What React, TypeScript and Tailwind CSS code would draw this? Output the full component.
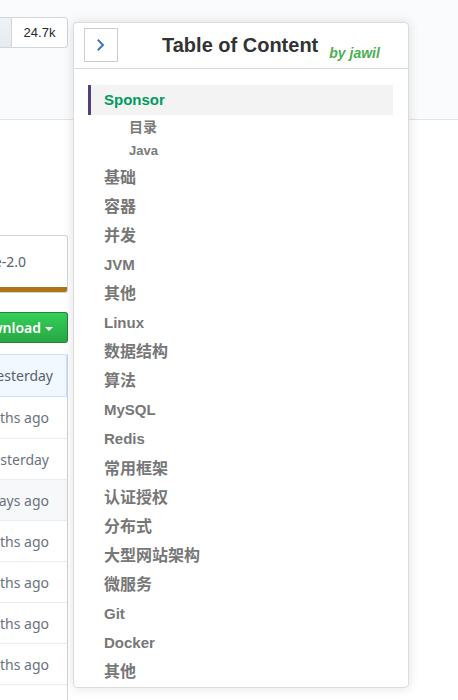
import React from 'react';

type TocItem = { label: string; level: 1 | 2; active?: boolean };

const toc: TocItem[] = [
  { label: 'Sponsor', level: 1, active: true },
  { label: '目录', level: 2 },
  { label: 'Java', level: 2 },
  { label: '基础', level: 1 },
  { label: '容器', level: 1 },
  { label: '并发', level: 1 },
  { label: 'JVM', level: 1 },
  { label: '其他', level: 1 },
  { label: 'Linux', level: 1 },
  { label: '数据结构', level: 1 },
  { label: '算法', level: 1 },
  { label: 'MySQL', level: 1 },
  { label: 'Redis', level: 1 },
  { label: '常用框架', level: 1 },
  { label: '认证授权', level: 1 },
  { label: '分布式', level: 1 },
  { label: '大型网站架构', level: 1 },
  { label: '微服务', level: 1 },
  { label: 'Git', level: 1 },
  { label: 'Docker', level: 1 },
  { label: '其他', level: 1 },
];

const commits = [
  { age: '6 months ago', hover: false },
  { age: 'yesterday', hover: false },
  { age: '3 days ago', hover: true },
  { age: '4 months ago', hover: false },
  { age: '5 months ago', hover: false },
  { age: '2 months ago', hover: false },
  { age: '8 months ago', hover: false },
  { age: '', hover: false },
];

const isCjk = (s: string) => /[\u4e00-\u9fff]/.test(s);

const ChevronRight: React.FC = () => (
  <svg width="8" height="12" viewBox="0 0 8 12" fill="none">
    <polyline points="1.5,1.5 6,6 1.5,10.5" stroke="#4078c0" strokeWidth="2" strokeLinecap="square" />
  </svg>
);

const TocPanel: React.FC = () => (
  <div className="absolute left-[73px] top-[22px] h-[666px] w-[336px] rounded-[4px] border border-[#dcdcdc] bg-white shadow-[0_0_12px_rgba(0,0,0,0.12)]">
    <div className="flex h-[46px] items-center border-b border-[#d8d8d8] pb-[1px]">
      <button className="ml-[10px] flex h-[34px] w-[34px] items-center justify-center border border-[#cccccc] bg-white">
        <ChevronRight />
      </button>
      <h2 className="ml-[44px] text-[20px] font-bold leading-[23px] text-[#333333]">Table of Content</h2>
      <span className="ml-[11px] mt-[15px] text-[14px] font-bold italic leading-[16px] text-[#4caf50]">by jawil</span>
    </div>
    <ul className="ml-[14px] mr-[15px] mt-[16px]">
      {toc.map((item, i) => {
        if (item.active) {
          return (
            <li
              key={i}
              className="flex h-[30px] items-center border-l-[3px] border-[#563d7c] bg-[#f3f3f3] pl-[13px] text-[15px] font-bold text-[#009a61]"
            >
              {item.label}
            </li>
          );
        }
        if (item.level === 2) {
          return (
            <li
              key={i}
              className={`flex h-[24px] items-center pl-[41px] font-bold text-[#7a7a7a] ${isCjk(item.label) ? 'text-[14px]' : 'text-[13px]'}`}
            >
              {item.label}
            </li>
          );
        }
        return (
          <li
            key={i}
            className={`flex h-[29.12px] items-center pl-[16px] font-bold text-[#777777] ${isCjk(item.label) ? 'text-[16px]' : 'text-[15px]'}`}
          >
            {item.label}
          </li>
        );
      })}
    </ul>
  </div>
);

export default function App() {
  return (
    <div className="relative h-[700px] w-[458px] overflow-hidden bg-white font-['Liberation_Sans','Noto_Sans_CJK_SC',sans-serif]">
      {/* repo header strip */}
      <div className="h-[120px] border-b border-[#e1e4e8] bg-[#fafbfc] pt-[17px]">
        <div className="flex h-[31px] w-[68px]">
          <div className="w-[11px] border-y border-[#d1d5da] bg-gradient-to-b from-[#eff3f6] to-[#e6ebf1]" />
          <div className="flex w-[57px] items-center justify-center rounded-r-[3px] border border-[#d1d5da] bg-white text-[13px] text-[#24292e]">
            24.7k
          </div>
        </div>
      </div>

      {/* left column, clipped by the viewport */}
      <div className="w-[68px] overflow-hidden pt-[115px] font-['Noto_Sans',sans-serif]">
        <div className="overflow-hidden rounded-r-[3px] border border-l-0 border-[#d1d5da]">
          <div className="flex h-[51px] items-center justify-end overflow-hidden pr-[41px] text-[14px] whitespace-nowrap text-[#586069]">
            Apache-2.0
          </div>
          <div className="h-[5px] bg-[#b07219]" />
        </div>

        <div className="mt-[19px] flex h-[31px] items-center justify-end overflow-hidden whitespace-nowrap rounded-r-[3px] border border-l-0 border-[#22863a] bg-gradient-to-b from-[#34d058] to-[#28a745] pr-[14px] text-[14px] font-semibold text-white">
          Clone or download
          <span className="ml-[4px] mt-[2px] h-0 w-0 border-x-[4px] border-t-[4px] border-x-transparent border-t-white" />
        </div>

        <div className="mt-[11px] border-r border-[#d1d5da]">
          <div className="flex h-[43px] items-center justify-end overflow-hidden whitespace-nowrap rounded-tr-[3px] border border-l-0 border-[#c8e1ff] bg-[#f1f8ff] pr-[13px] text-[14px] text-[#586069]">
            Latest commit yesterday
          </div>
          {commits.map((c, i) => (
            <div
              key={i}
              className={`flex h-[41px] items-center justify-end overflow-hidden whitespace-nowrap pr-[18px] text-[14px] text-[#6a737d] ${i === 0 ? '' : 'border-t border-[#eaecef]'} ${c.hover ? 'bg-[#f6f8fa]' : 'bg-white'}`}
            >
              {c.age}
            </div>
          ))}
        </div>
      </div>

      <TocPanel />
    </div>
  );
}
